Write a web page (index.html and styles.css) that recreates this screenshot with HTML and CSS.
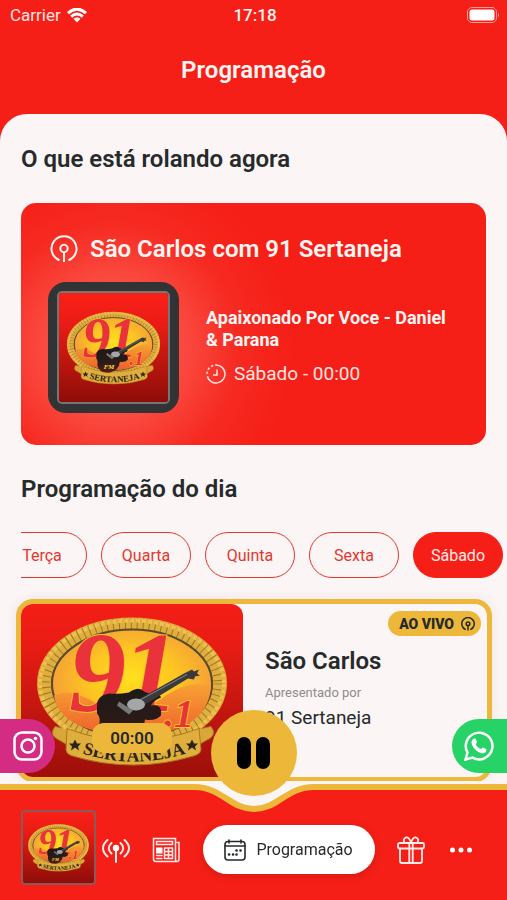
FILE: index.html
```html
<!DOCTYPE html>
<html lang="pt-BR">
<head>
    <meta charset="UTF-8">
    <meta name="viewport" content="width=device-width, initial-scale=1.0">
    <title>Programação</title>
    <link rel="stylesheet" href="styles.css">
</head>
<body>
    <!-- Shared drawings -->
    <svg class="sprite" aria-hidden="true">
        <defs>
            <linearGradient id="logo-bg" x1="0" y1="0" x2="0" y2="1">
                <stop offset="0" stop-color="#fb2018"/>
                <stop offset="0.3" stop-color="#e81c14"/>
                <stop offset="1" stop-color="#8e0d08"/>
            </linearGradient>
            <radialGradient id="logo-sun" cx="0.5" cy="0.45" r="0.55">
                <stop offset="0" stop-color="#ffe01e"/>
                <stop offset="0.5" stop-color="#fdc521"/>
                <stop offset="1" stop-color="#f39a3c"/>
            </radialGradient>
            <linearGradient id="logo-hill" x1="0" y1="0" x2="0" y2="1">
                <stop offset="0" stop-color="#f7a233"/>
                <stop offset="1" stop-color="#ee5f2c"/>
            </linearGradient>
            <linearGradient id="guitar-body" x1="0" y1="0" x2="0" y2="1">
                <stop offset="0" stop-color="#1d1a19"/>
                <stop offset="0.6" stop-color="#2b1a17"/>
                <stop offset="1" stop-color="#5a1c16"/>
            </linearGradient>
            <path id="ribbon-line" d="M58 173Q112 191 168 173"/>
        </defs>
        <symbol id="logo" viewBox="0 0 222 222" preserveAspectRatio="xMidYMid slice">
            <rect width="222" height="222" fill="url(#logo-bg)"/>
            <path d="M34 147Q27 156 39 161L49 167V150ZM190 147Q197 156 185 161L175 167V150Z" fill="#d9a63a" stroke="#a9791f"/>
            <ellipse cx="111" cy="104" rx="88" ry="59" fill="none" stroke="#dfae3c" stroke-width="14"/>
            <ellipse cx="111" cy="104" rx="88" ry="59" fill="none" stroke="#9a7628" stroke-width="13" stroke-dasharray="1 5"/>
            <ellipse cx="111" cy="104" rx="92" ry="63" fill="none" stroke="#eec050" stroke-width="4" stroke-dasharray="4 2"/>
            <ellipse cx="111" cy="104" rx="80" ry="54" fill="url(#logo-sun)" stroke="#5a4a2c" stroke-width="2"/>
            <path d="M33 116Q50 108 75 124Q112 142 145 116Q170 100 190 106Q188 154 111 157Q38 152 33 116Z" fill="url(#logo-hill)"/>
            <g class="logo-digits">
                <text x="48" y="131" font-size="114">9</text>
                <text x="101" y="131" font-size="114">1</text>
                <text x="143" y="147" font-size="40">.1</text>
            </g>
            <path d="M46 149Q111 174 178 149L180 170Q180 174 174 176Q112 195 50 176Q45 174 45 170Z" fill="#dfae3c" stroke="#a9791f"/>
            <path d="M76 126Q76 116 88 114Q98 115 108 113Q118 106 123 112Q130 116 138 114L140 118Q132 121 130 126Q142 124 140 136Q134 142 124 140Q122 158 104 162Q80 164 78 146Q80 138 76 134Z" fill="url(#guitar-body)"/>
            <path d="M112 123L163 94L171 90L173 92L178 90L176 94L179 96L174 97L173 100L167 99L119 128Z" fill="#3a3a3c"/>
            <path d="M118 121L166 95" stroke="#86888a" stroke-width="1"/>
            <ellipse cx="115" cy="125" rx="9" ry="6" fill="#a5a6a8"/>
            <path d="M98 122L112 131L108 135L96 126Z" fill="#77787a"/>
            <text x="91" y="154" class="logo-fm">FM</text>
            <text class="logo-name"><textPath href="#ribbon-line" startOffset="50%">SERTANEJA</textPath></text>
            <path id="logo-star" d="M54 160L56 164H60L57 167L58 171L54 168L50 171L51 167L48 164H52Z" fill="#2b2417"/>
            <use href="#logo-star" x="117"/>
        </symbol>
        <symbol id="icon-podcast" viewBox="0 0 28 28">
            <path d="M9.500 25.300A12.500 12.500 0 1 1 18.500 25.300M14 17V27"/>
            <circle cx="14" cy="13.500" r="3.700"/>
        </symbol>
    </svg>

    <!-- Top bar -->
    <header class="top">
        <div class="status-bar">
            <div class="carrier">
                <span>Carrier</span>
                <svg class="wifi" viewBox="0 0 20 15" aria-hidden="true">
                    <path d="M1 5.200Q10-3 19 5.200M4.200 8.600Q10 3.400 15.800 8.600"/>
                    <path class="wifi-dot" d="M6.500 10.800Q10 7.800 13.500 10.800L10 14.500Z"/>
                </svg>
            </div>
            <span class="clock">17:18</span>
            <svg class="battery" viewBox="0 0 33 16" aria-hidden="true">
                <rect class="battery-shell" x="0.5" y="0.500" width="29" height="15" rx="4.500"/>
                <rect x="2.500" y="2.500" width="25" height="11" rx="2.500"/>
                <path class="battery-tip" d="M31 5.500Q33 8 31 10.500Z"/>
            </svg>
        </div>
        <h1 class="page-title">Programação</h1>
    </header>

    <main class="content">
        <h2 class="section-title">O que está rolando agora</h2>

        <section class="now-card">
            <div class="now-head">
                <svg class="now-icon" aria-hidden="true"><use href="#icon-podcast"/></svg>
                <h3 class="show-title">São Carlos com 91 Sertaneja</h3>
            </div>
            <div class="now-body">
                <div class="cover">
                    <svg class="cover-art" role="img" aria-label="91.1 FM Sertaneja"><use href="#logo"/></svg>
                </div>
                <div class="now-info">
                    <p class="song">Apaixonado Por Voce - Daniel &amp;&nbsp;Parana</p>
                    <p class="when">
                        <svg class="when-icon" viewBox="0 0 20 20" stroke-width="1.500" aria-hidden="true">
                            <path d="M10 1A9 9 0 1 1 1.300 12.300"/>
                            <path d="M1 10A9 9 0 0 1 10 1" stroke-dasharray="2.400 2"/>
                            <path d="M11 5.500V11H7"/>
                        </svg>
                        <span>Sábado - 00:00</span>
                    </p>
                </div>
            </div>
        </section>

        <h2 class="section-title">Programação do dia</h2>

        <div class="days">
            <button class="day" type="button">Terça</button>
            <button class="day" type="button">Quarta</button>
            <button class="day" type="button">Quinta</button>
            <button class="day" type="button">Sexta</button>
            <button class="day active" type="button" aria-pressed="true">Sábado</button>
        </div>

        <article class="show-card">
            <div class="show-cover">
                <svg class="show-art" role="img" aria-label="91.1 FM Sertaneja"><use href="#logo"/></svg>
                <span class="show-time">00:00</span>
            </div>
            <div class="show-info">
                <span class="live">AO VIVO <svg class="live-icon" aria-hidden="true"><use href="#icon-podcast"/></svg></span>
                <h3 class="show-title">São Carlos</h3>
                <p class="host-label">Apresentado por</p>
                <p class="host">91 Sertaneja</p>
            </div>
        </article>
    </main>

    <!-- Social shortcuts -->
    <a class="social instagram" href="#" aria-label="Instagram">
        <svg viewBox="0 0 30 30" stroke-width="2.500" aria-hidden="true">
            <rect x="1.500" y="1.500" width="27" height="27" rx="7.500"/>
            <circle cx="15" cy="15" r="6.500"/>
            <circle class="dot" cx="22.500" cy="7.500" r="1.800"/>
        </svg>
    </a>
    <a class="social whatsapp" href="#" aria-label="WhatsApp">
        <svg viewBox="0 0 30 30" stroke-width="2.500" aria-hidden="true">
            <path d="M1.500 28.500L3.500 21.500A13.300 13.300 0 1 1 8.600 26.600Z"/>
            <path class="phone" d="M10 7.500C10.700 7.300 11.500 7.300 11.800 8.100L13 11C13.200 11.700 12.100 12.700 11.700 13.200C13 15.700 14.500 17 17 18.100C17.600 17.600 18.300 16.300 18.900 16.500L22 18C22.600 18.300 22.500 19.500 22.100 20.400C21.400 21.700 19.500 22.600 17.800 22.200C13.200 21.100 9.500 17.500 7.900 13.500C7.100 11.100 7.700 8.600 10 7.500Z"/>
        </svg>
    </a>

    <!-- Player and tab bar -->
    <nav class="tab-bar" aria-label="Menu">
        <div class="tab-edge" aria-hidden="true">
            <span class="edge-side"></span>
            <svg class="edge-notch" viewBox="0 0 160 119">
                <path d="M0 0H160V119H0Z" fill="#f51f17"/>
                <path d="M0 0H160V6H140C112 6 104 28 80 28C56 28 48 6 20 6H0Z" fill="#fbf5f5"/>
                <path d="M0 6H20C48 6 56 28 80 28C104 28 112 6 140 6H160" fill="none" stroke="#edb73a" stroke-width="6"/>
            </svg>
            <span class="edge-side"></span>
        </div>
        <button class="pause" type="button" aria-label="Pausar">
            <span class="pause-line"></span>
            <span class="pause-line"></span>
        </button>
        <a class="tab-cover" href="#" aria-label="Tocando agora">
            <svg class="tab-art" aria-hidden="true"><use href="#logo"/></svg>
        </a>
        <div class="tabs">
            <a class="tab" href="#" aria-label="Rádio">
                <svg viewBox="0 0 28 28" stroke-width="2" aria-hidden="true">
                    <path d="M5.500 4Q-3.500 12 5.500 20.500M9.500 7Q4 12 9.500 17.500M22.500 4Q31.500 12 22.500 20.500M18.500 7Q24 12 18.500 17.500M14 13V26"/>
                    <circle class="fill" cx="14" cy="12" r="3.200"/>
                </svg>
            </a>
            <a class="tab" href="#" aria-label="Notícias">
                <svg viewBox="0 0 28 28" stroke-width="1.500" aria-hidden="true">
                    <path d="M24 25.500H4Q1.500 25.500 1.500 23V2.500H23.500V23Q23.500 25.500 25.200 25.500Q27 25.500 27 23V6.500H25M4.500 5.500H20.500V8.500H4.500ZM12.500 12V22.500M16.500 12V22.500M20.500 12V22.500M12.500 12H20.500M12.500 15.500H20.500M12.500 19H20.500M12.500 22.500H20.500M4.500 22.500H10M4.500 19.500H10"/>
                    <rect class="fill" x="4" y="11.500" width="6.500" height="6"/>
                </svg>
            </a>
            <a class="tab current" href="#" aria-current="page">
                <svg viewBox="0 0 22 22" stroke-width="1.600" aria-hidden="true">
                    <rect x="1" y="2.500" width="20" height="18.500" rx="3"/>
                    <path d="M1 7H21M5 1V4M17 1V4"/>
                    <path stroke-width="2.600" d="M5 15.500H5.100M9 15.500H9.100M12.500 11.500H12.600M16.500 11.500H16.600M12.500 15.500H12.600"/>
                </svg>
                <span>Programação</span>
            </a>
            <a class="tab" href="#" aria-label="Promoções">
                <svg viewBox="0 0 28 28" stroke-width="1.800" aria-hidden="true">
                    <rect x="1" y="7" width="26" height="5.500" rx="1.500"/>
                    <path d="M3 12.500V25Q3 27 5 27H23Q25 27 25 25V12.500M12.300 7V27M15.700 7V27M14 6.500Q12 1 9 1.500Q5.500 3 7.500 6.500M14 6.500Q16 1 19 1.500Q22.500 3 20.500 6.500"/>
                </svg>
            </a>
            <a class="tab" href="#" aria-label="Mais">
                <svg viewBox="0 0 28 28" aria-hidden="true">
                    <circle class="fill" cx="5.500" cy="14" r="2.500"/>
                    <circle class="fill" cx="14" cy="14" r="2.500"/>
                    <circle class="fill" cx="22.500" cy="14" r="2.500"/>
                </svg>
            </a>
        </div>
    </nav>
</body>
</html>
```

FILE: styles.css
```css
* {
    box-sizing: border-box;
}

body {
    margin: 0;
    font-family: Roboto, "Liberation Sans", sans-serif;
    background-color: #f51f17;
    color: #262a2a;
}

h1, h2, h3, p {
    margin: 0;
}

button {
    font-family: inherit;
    cursor: pointer;
}

svg {
    display: block;
    fill: none;
}

.sprite {
    position: absolute;
    width: 0;
    height: 0;
}

/* Logo */
.logo-digits {
    font-family: "Liberation Serif", serif;
    font-weight: bold;
    font-style: italic;
    fill: #e9323a;
    stroke: #fbc02a;
    stroke-width: 2px;
    paint-order: stroke;
}

.logo-fm {
    font-family: "Liberation Serif", serif;
    font-size: 14px;
    font-weight: bold;
    font-style: italic;
    fill: #ffdf3a;
}

.logo-name {
    font-family: "Liberation Serif", serif;
    font-size: 18px;
    font-weight: bold;
    text-anchor: middle;
    fill: #2b2417;
}

/* Top bar */
.top {
    height: 114px;
    color: #fff5f3;
}

.status-bar {
    display: grid;
    grid-template-columns: 1fr auto 1fr;
    align-items: center;
    height: 30px;
    padding: 0 7px 0 10px;
}

.carrier {
    display: flex;
    align-items: center;
    gap: 6px;
    font-size: 17px;
    color: #ffe3e0;
}

.wifi {
    width: 20px;
    height: 15px;
    stroke: #ffffff;
    stroke-width: 3px;
}

.wifi-dot {
    fill: #ffffff;
    stroke: none;
}

.clock {
    font-size: 17px;
    font-weight: 500;
}

.battery {
    justify-self: end;
    width: 33px;
    height: 16px;
    fill: #ffffff;
}

.battery-shell {
    fill: none;
    stroke: #ff9a94;
}

.battery-tip {
    fill: #ff9a94;
}

.page-title {
    margin-top: 26px;
    font-size: 24px;
    font-weight: 600;
    line-height: 28px;
    text-align: center;
}

/* Content */
.content {
    padding: 31px 0 118px;
    background-color: #fbf5f5;
    border-radius: 27px 27px 0 0;
}

.section-title {
    margin: 0 21px;
    font-size: 24px;
    font-weight: 600;
    line-height: 28px;
}

.now-card {
    margin: 30px 21px;
    padding: 32px 27px;
    border-radius: 15px;
    background: radial-gradient(circle at 92px 145px, #fb5c52 0, #fa4a40 70px, #f62a21 125px, #f51f17 180px);
    color: #fff5f3;
}

.now-head {
    display: flex;
    align-items: center;
    gap: 12px;
    height: 28px;
    padding-left: 2px;
}

.now-icon {
    width: 28px;
    height: 28px;
    stroke: #fff5f3;
    stroke-width: 2px;
}

.show-title {
    font-size: 24px;
    font-weight: 600;
    line-height: 28px;
}

.now-body {
    display: flex;
    align-items: center;
    gap: 27px;
    margin-top: 19px;
}

.cover {
    flex: none;
    padding: 9px;
    border-radius: 18px;
    background-color: #313334;
}

.cover-art {
    width: 113px;
    height: 113px;
    border: 2px solid #767575;
    border-radius: 5px;
}

.now-info {
    padding-bottom: 4px;
}

.song {
    font-size: 18px;
    font-weight: 700;
    line-height: 22px;
}

.when {
    display: flex;
    align-items: center;
    gap: 8px;
    margin-top: 12px;
    font-size: 19px;
    line-height: 22px;
    color: #ffe3e0;
}

.when-icon {
    width: 20px;
    height: 20px;
    stroke: #ffe3e0;
}

/* Days */
.days {
    display: flex;
    justify-content: flex-end;
    gap: 14px;
    margin: 29px 0 21px 21px;
    padding-right: 4px;
    overflow: hidden;
}

.day {
    flex: none;
    width: 90px;
    height: 46px;
    padding: 0;
    border: 1px solid #e2382f;
    border-radius: 23px;
    background-color: transparent;
    font-size: 16px;
    color: #e2382f;
}

.day.active {
    border-color: #f51f17;
    background-color: #f51f17;
    color: #ffe9e7;
}

/* Programme card */
.show-card {
    display: flex;
    margin: 0 15px 0 16px;
    border: 5px solid #edb73a;
    border-radius: 17px;
    background-color: #fbf5f5;
    box-shadow: 0 0 12px rgba(90, 40, 30, 0.08);
}

.show-cover {
    position: relative;
    flex: 0 0 222px;
}

.show-art {
    width: 100%;
    height: 173px;
    border-radius: 12px;
}

.show-time {
    position: absolute;
    left: 50%;
    bottom: 24px;
    width: 80px;
    margin-left: -40px;
    border-radius: 12px;
    background-color: #edb73a;
    font-size: 17px;
    font-weight: 600;
    line-height: 30px;
    text-align: center;
}

.show-info {
    display: flex;
    flex: 1;
    flex-direction: column;
    padding: 7px 6px 0 22px;
}

.live {
    display: flex;
    align-items: center;
    align-self: flex-end;
    gap: 7px;
    height: 25px;
    margin-bottom: 11px;
    padding: 0 6px 0 11px;
    border-radius: 13px;
    background-color: #edb73a;
    font-size: 14px;
    font-weight: 900;
}

.live-icon {
    width: 14px;
    height: 14px;
    stroke: #262a2a;
    stroke-width: 3px;
}

.host-label {
    margin-top: 10px;
    font-size: 13px;
    line-height: 16px;
    color: #8f8c8c;
}

.host {
    margin-top: 6px;
    font-size: 19px;
    line-height: 22px;
}

/* Social shortcuts */
.social {
    position: fixed;
    bottom: 127px;
    z-index: 2;
    display: flex;
    align-items: center;
    width: 55px;
    height: 54px;
}

.social svg {
    width: 30px;
    height: 30px;
    stroke: #ffffff;
}

.social .dot,
.social .phone {
    fill: #ffffff;
    stroke: none;
}

.instagram {
    left: 0;
    padding-left: 13px;
    border-radius: 0 27px 27px 0;
    background-color: #d52c83;
}

.whatsapp {
    right: 0;
    padding-left: 12px;
    border-radius: 27px 0 0 27px;
    background-color: #27d366;
}

/* Tab bar */
.tab-bar {
    position: fixed;
    right: 0;
    bottom: 0;
    left: 0;
    z-index: 3;
    display: flex;
    align-items: center;
    height: 119px;
    padding: 14px 32px 0 21px;
}

.tab-edge {
    position: absolute;
    inset: 0;
    z-index: -1;
    display: flex;
}

.edge-side {
    flex: 1;
    border-top: 3px solid #fbf5f5;
    background: linear-gradient(#edb73a 6px, #f51f17 6px);
}

.edge-notch {
    width: 160px;
    height: 119px;
}

.pause {
    position: absolute;
    top: -71px;
    left: 50%;
    display: flex;
    align-items: center;
    justify-content: center;
    gap: 5px;
    width: 86px;
    height: 86px;
    margin-left: -43px;
    padding: 0;
    border: none;
    border-radius: 50%;
    background-color: #edb73a;
}

.pause-line {
    width: 14px;
    height: 32px;
    border-radius: 7px;
    background-color: #000000;
}

.tab-cover {
    flex: none;
}

.tab-art {
    width: 75px;
    height: 75px;
    border: 2px solid #8a5a58;
    border-radius: 4px;
}

.tabs {
    display: flex;
    flex: 1;
    align-items: center;
    justify-content: space-between;
    padding: 4px 0 0 6px;
}

.tab svg {
    width: 28px;
    height: 28px;
    stroke: #ffeceb;
    stroke-linecap: round;
}

.tab .fill {
    fill: #ffffff;
    stroke: none;
}

.tab.current {
    display: flex;
    align-items: center;
    justify-content: center;
    gap: 10px;
    width: 172px;
    height: 49px;
    border-radius: 25px;
    background-color: #ffffff;
    box-shadow: 0 2px 8px rgba(80, 0, 0, 0.2);
    font-size: 16px;
    text-decoration: none;
    color: #262a2a;
}

.tab.current svg {
    width: 22px;
    height: 22px;
    stroke: #262a2a;
}
```
